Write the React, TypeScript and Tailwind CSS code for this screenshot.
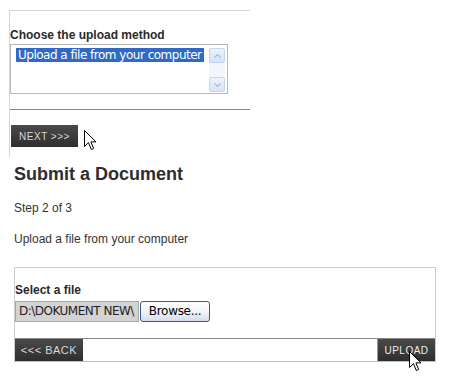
import React from "react";

const Cursor = ({ className }: { className: string }) => (
  <svg className={className} width="13" height="21" viewBox="0 0 13 21">
    <path
      d="M0.5 0.5 L0.5 16.5 L4.5 12.7 L7.3 19.5 L9.6 18.5 L6.9 11.9 L12 11.9 Z"
      fill="#ffffff"
      stroke="#000000"
      strokeWidth="1"
      strokeLinejoin="miter"
    />
  </svg>
);

const darkBtn =
  "flex items-center justify-center h-[22px] bg-[linear-gradient(#4a4a4a,#2e2e2e)] text-[#d8d8d8] text-[10px] tracking-[0.5px] font-['Liberation_Sans',Arial,sans-serif]";

export default function App() {
  return (
    <div className="relative w-[463px] h-[377px] bg-white overflow-hidden font-['Liberation_Sans',Arial,sans-serif] text-[#333333]">
      {/* Top step */}
      <div className="ml-[9px] mt-[10px] w-[241px] h-[147px] border-l border-t border-[#d6d6d6]">
        <div className="mt-[17px] text-[12px] leading-[14px] font-bold text-[#2a2a2a]">
          Choose the upload method
        </div>
        <div className="mt-[2px] w-[218px] h-[50px] border border-[#b8b8b8] flex pt-[3px] pl-[5px] pr-[1px] pb-[1px]">
          <div className="flex-1">
            <div className="w-[188px] h-[14px] bg-[#316ac5] text-white text-[12px] leading-[14px] pl-[2px] font-['DejaVu_Sans',Tahoma,sans-serif] tracking-[-0.5px] whitespace-nowrap overflow-hidden">
              Upload a file from your computer
            </div>
          </div>
          <div className="w-[16px] flex flex-col mr-[1px]">
            <div className="h-[15px] border border-[#c3d3f0] bg-[linear-gradient(#eef3fd,#d6e2f8)] rounded-[2px] flex items-center justify-center">
              <svg width="7" height="4" viewBox="0 0 7 4">
                <path d="M0.5 3.5 L3.5 0.5 L6.5 3.5" fill="none" stroke="#a9bad8" strokeWidth="1.2" />
              </svg>
            </div>
            <div className="flex-1 bg-[#f2f5fb]" />
            <div className="h-[15px] border border-[#c3d3f0] bg-[linear-gradient(#eef3fd,#d6e2f8)] rounded-[2px] flex items-center justify-center">
              <svg width="7" height="4" viewBox="0 0 7 4">
                <path d="M0.5 0.5 L3.5 3.5 L6.5 0.5" fill="none" stroke="#a9bad8" strokeWidth="1.2" />
              </svg>
            </div>
          </div>
        </div>
        <div className="mt-[15px] border-t border-[#8a8a8a]" />
        <div className="mt-[15px] ml-[1px] w-[67px]">
          <div className={darkBtn}>NEXT &gt;&gt;&gt;</div>
        </div>
      </div>

      {/* Step 2 */}
      <div className="pl-[14px]">
        <div className="mt-[6px] text-[18px] leading-[22px] font-bold text-[#2e2e2e]">
          Submit a Document
        </div>
        <div className="mt-[16px] text-[12px] leading-[14px]">Step 2 of 3</div>
        <div className="mt-[17px] text-[12px] leading-[14px]">
          Upload a file from your computer
        </div>
      </div>

      <div className="ml-[14px] mt-[21px] w-[422px] border border-[#cccccc] border-b-[#bdbdbd]">
        <div className="pt-[15px] text-[12px] leading-[14px] font-bold text-[#2a2a2a]">
          Select a file
        </div>
        <div className="mt-[4px] flex items-center gap-[1px] h-[21px]">
          <div className="w-[124px] h-[21px] bg-[#d3d3d3] border border-[#a9a9a9] text-[12px] leading-[19px] pl-[3px] text-[#222] font-['DejaVu_Sans',Tahoma,sans-serif] tracking-[-0.5px] whitespace-nowrap overflow-hidden">
            D:\DOKUMENT NEW\
          </div>
          <div className="w-[70px] h-[21px] rounded-[3px] border border-[#3b5a8a] bg-[linear-gradient(#ffffff,#f1f3f7_50%,#d4dcea)] text-[12px] leading-[19px] text-center text-black font-['DejaVu_Sans',Tahoma,sans-serif] tracking-[-0.3px]">
            Browse...
          </div>
        </div>
        <div className="mt-[16px] border-t border-[#888888] flex justify-between">
          <div className={`${darkBtn} w-[68px] text-[11px]`}>&lt;&lt;&lt; BACK</div>
          <div className="border-l border-[#9a9a9a]">
            <div className={`${darkBtn} w-[57px] text-[#f0f0f0]`}>UPLOAD</div>
          </div>
        </div>
      </div>

      <Cursor className="absolute left-[84px] top-[130px]" />
      <Cursor className="absolute left-[409px] top-[351px]" />
    </div>
  );
}
